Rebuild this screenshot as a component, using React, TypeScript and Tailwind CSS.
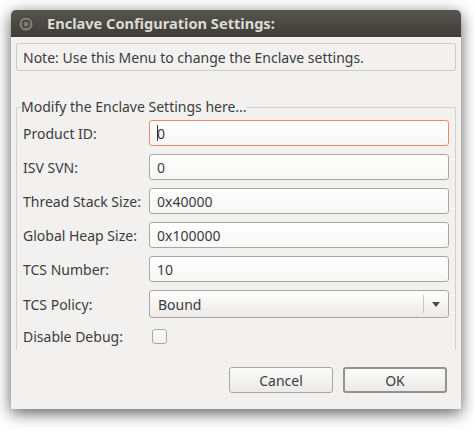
import React from "react";

const font = { fontFamily: '"Noto Sans", "Open Sans", sans-serif' };

function CloseButton() {
  return (
    <svg width="16" height="16" viewBox="0 0 16 16" className="shrink-0">
      <circle cx="8" cy="8" r="7.3" fill="#7c7a75" stroke="#3a3935" strokeWidth="1" />
      <rect x="5" y="5" width="6" height="6" rx="1" fill="none" stroke="#3a3935" strokeWidth="1.3" />
    </svg>
  );
}

function Field({ value, focused }: { value: string; focused?: boolean }) {
  return (
    <div
      className={`flex h-[26px] items-center rounded-[3px] border bg-gradient-to-b from-white to-[#f7f7f6] pl-[7px] text-[14px] text-[#3c3c3c] ${
        focused ? "border-[#e98b62]" : "border-[#a9a7a4]"
      }`}
    >
      {focused && <span className="mr-[-1px] h-[16px] w-px bg-[#333]" />}
      {value}
    </div>
  );
}

const rows = [
  { label: "Product ID:", value: "0", focused: true },
  { label: "ISV SVN:", value: "0" },
  { label: "Thread Stack Size:", value: "0x40000" },
  { label: "Global Heap Size:", value: "0x100000" },
  { label: "TCS Number:", value: "10" },
];

export default function App() {
  return (
    <div className="h-[431px] w-[474px] overflow-hidden bg-white pl-[11px] pt-[10px]" style={font}>
      <div className="flex h-[399px] w-[450px] flex-col overflow-hidden rounded-t-[5px] bg-[#f2f1f0] shadow-[0_4px_16px_rgba(0,0,0,0.65)]">
        <div className="flex h-[27px] items-center gap-[13px] bg-gradient-to-b from-[#57554f] to-[#3e3d39] pl-[7px]">
          <CloseButton />
          <span className="text-[14.6px] font-bold text-[#dfdbd2]">Enclave Configuration Settings:</span>
        </div>

        <div className="flex flex-1 flex-col px-[5px] pt-[6px]">
          <div className="flex h-[28px] w-[440px] items-center rounded-[2px] border border-[#cfccc8] pl-[6px] text-[14px] text-[#3c3c3c]">
            Note: Use this Menu to change the Enclave settings.
          </div>

          <fieldset className="mt-[27px] h-[252px] w-[440px] rounded-tl-[2px] rounded-tr-[2px] border border-b-0 border-[#d3d0cc] px-0">
            <legend className="ml-[4px] px-0 text-[14px] leading-[18px] text-[#3c3c3c]">
              Modify the Enclave Settings here...
            </legend>
            <div className="mt-[4px] grid grid-cols-[126px_300px] items-center gap-y-[8px] pl-[6px]">
              {rows.map((r) => (
                <React.Fragment key={r.label}>
                  <span className="text-[14px] text-[#3c3c3c]">{r.label}</span>
                  <Field value={r.value} focused={r.focused} />
                </React.Fragment>
              ))}
              <span className="text-[14px] text-[#3c3c3c]">TCS Policy:</span>
              <div className="flex h-[28px] items-center rounded-[3px] border border-[#a9a7a4] bg-gradient-to-b from-white to-[#ebeae8] text-[14px] text-[#3c3c3c]">
                <span className="flex-1 pl-[8px]">Bound</span>
                <span className="h-[18px] w-px bg-[#c9c7c3]" />
                <span className="flex w-[24px] justify-center">
                  <svg width="8" height="5" viewBox="0 0 8 5">
                    <path d="M0 0h8L4 5z" fill="#4c4c4c" />
                  </svg>
                </span>
              </div>
              <span className="text-[14px] text-[#3c3c3c]">Disable Debug:</span>
              <div className="flex h-[20px] items-center pl-[3px]">
                <span className="h-[15px] w-[15px] rounded-[3px] border border-[#a9a7a4] bg-gradient-to-b from-white to-[#f1f0ee]" />
              </div>
            </div>
          </fieldset>

          <div className="mt-[17px] flex justify-end gap-[10px] pr-[9px]">
            <button className="h-[26px] w-[104px] rounded-[3px] border border-[#a9a7a4] bg-gradient-to-b from-[#fbfbfa] to-[#ebeae8] text-[14px] text-[#3c3c3c]">
              Cancel
            </button>
            <button className="h-[26px] w-[104px] rounded-[3px] border-2 border-[#949290] bg-gradient-to-b from-[#fbfbfa] to-[#ebeae8] text-[14px] text-[#3c3c3c]">
              OK
            </button>
          </div>
        </div>
      </div>
    </div>
  );
}
